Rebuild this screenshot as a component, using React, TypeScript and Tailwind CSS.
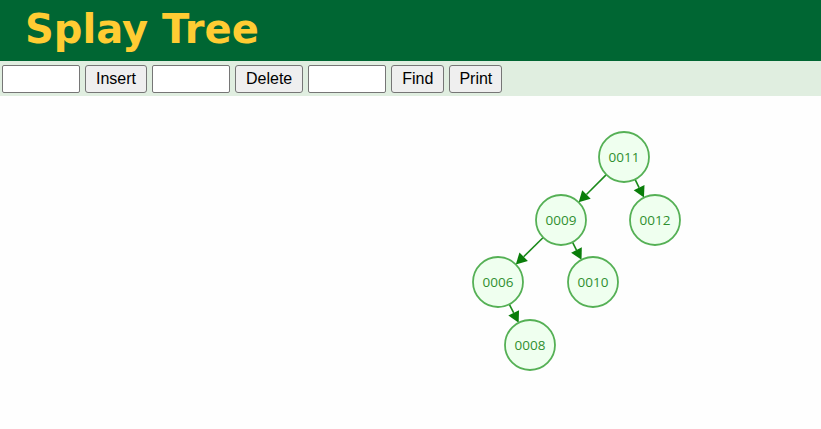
import React from "react";

const nodes: Record<string, [number, number]> = {
  "0011": [624, 61],
  "0009": [561, 124],
  "0012": [655, 124],
  "0006": [498, 186],
  "0010": [593, 186],
  "0008": [530, 249],
};
const edges: [string, string][] = [
  ["0011", "0009"],
  ["0011", "0012"],
  ["0009", "0006"],
  ["0009", "0010"],
  ["0006", "0008"],
];
const R = 25;

function Edge({ a, b }: { a: string; b: string }) {
  const [x1, y1] = nodes[a];
  const [x2, y2] = nodes[b];
  const dx = x2 - x1;
  const dy = y2 - y1;
  const len = Math.hypot(dx, dy);
  const ux = dx / len;
  const uy = dy / len;
  const sx = x1 + ux * R;
  const sy = y1 + uy * R;
  const tx = x2 - ux * R;
  const ty = y2 - uy * R;
  const bx = tx - ux * 11;
  const by = ty - uy * 11;
  const px = -uy * 6;
  const py = ux * 6;
  return (
    <g>
      <line x1={sx} y1={sy} x2={bx} y2={by} stroke="#1a8a1a" strokeWidth={1.6} />
      <polygon
        points={`${tx},${ty} ${bx + px},${by + py} ${bx - px},${by - py}`}
        fill="#0a7d0a"
      />
    </g>
  );
}

export default function App() {
  return (
    <div className="w-[821px] h-[429px] bg-white overflow-hidden flex flex-col">
      <div className="h-[61px] bg-[#006633] flex items-center pl-[25px]">
        <h1
          className="text-[40px] font-bold text-[#ffcc33] leading-none -mt-[4px]"
          style={{ fontFamily: '"DejaVu Sans", Verdana, sans-serif' }}
        >
          Splay Tree
        </h1>
      </div>
      <div
        className="h-[35px] bg-[#e0eee0] flex items-center pl-[2px] gap-[5px] text-[16px] text-black"
        style={{ fontFamily: '"Liberation Sans", Arial, sans-serif' }}
      >
        <input className="w-[78px] h-[28px] bg-white border border-[#767676] rounded-[2px]" />
        <button className="h-[28px] px-[10px] bg-[#efefef] border border-[#767676] rounded-[3px]">Insert</button>
        <input className="w-[78px] h-[28px] bg-white border border-[#767676] rounded-[2px]" />
        <button className="h-[28px] px-[10px] bg-[#efefef] border border-[#767676] rounded-[3px]">Delete</button>
        <input className="w-[78px] h-[28px] bg-white border border-[#767676] rounded-[2px]" />
        <button className="h-[28px] px-[10px] bg-[#efefef] border border-[#767676] rounded-[3px]">Find</button>
        <button className="h-[28px] px-[9px] bg-[#efefef] border border-[#767676] rounded-[3px]">Print</button>
      </div>
      <div className="flex-1 bg-[#fefefe]">
        <svg width={821} height={333}>
          {edges.map(([a, b]) => (
            <Edge key={a + b} a={a} b={b} />
          ))}
          {Object.entries(nodes).map(([k, [x, y]]) => (
            <g key={k}>
              <circle cx={x} cy={y} r={R} fill="#efffef" stroke="#55b055" strokeWidth={1.8} />
              <text
                x={x}
                y={y + 5}
                textAnchor="middle"
                fontSize={13.5}
                fill="#2f8f2f"
                style={{ fontFamily: '"Open Sans", "Noto Sans", sans-serif' }}
              >
                {k}
              </text>
            </g>
          ))}
        </svg>
      </div>
    </div>
  );
}
